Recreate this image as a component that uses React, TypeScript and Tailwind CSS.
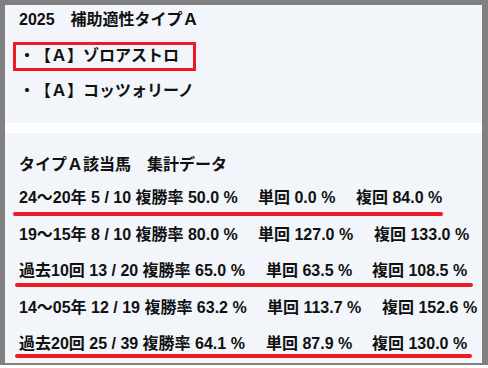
const FONT = { fontFamily: '"Liberation Sans", "Noto Sans CJK JP", sans-serif' };

type Row = {
  a: string;
  b: string;
  c: string;
  wa: string;
  wb: string;
  line?: { top: string; left: string; width: string };
};

const ROWS: Row[] = [
  {
    a: '24～20年 5 / 10 複勝率 50.0 %',
    b: '単回 0.0 %',
    c: '複回 84.0 %',
    wa: 'w-[239px]',
    wb: 'w-[98px]',
    line: { top: 'top-[32px]', left: '-left-[6px]', width: 'w-[430px]' },
  },
  {
    a: '19～15年 8 / 10 複勝率 80.0 %',
    b: '単回 127.0 %',
    c: '複回 133.0 %',
    wa: 'w-[239px]',
    wb: 'w-[116px]',
  },
  {
    a: '過去10回 13 / 20 複勝率 65.0 %',
    b: '単回 63.5 %',
    c: '複回 108.5 %',
    wa: 'w-[247px]',
    wb: 'w-[106px]',
    line: { top: 'top-[30px]', left: '-left-[4px]', width: 'w-[458px]' },
  },
  {
    a: '14～05年 12 / 19 複勝率 63.2 %',
    b: '単回 113.7 %',
    c: '複回 152.6 %',
    wa: 'w-[248px]',
    wb: 'w-[115px]',
  },
  {
    a: '過去20回 25 / 39 複勝率 64.1 %',
    b: '単回 87.9 %',
    c: '複回 130.0 %',
    wa: 'w-[247px]',
    wb: 'w-[106px]',
    line: { top: 'top-[28px]', left: '-left-[4px]', width: 'w-[457px]' },
  },
];

export default function App() {
  return (
    <div className="w-[488px] h-[368px] bg-white [text-spacing-trim:space-all]" style={FONT}>
      <div className="h-[365px] bg-[#808080] pl-[5px] pt-[5px] pr-[6px] pb-[3px]">
        <div className="h-full bg-white flex flex-col gap-[10px] text-[16px] font-bold text-[#111]">
          {/* 補助適性タイプ */}
          <section className="h-[118px] shrink-0 bg-[#f2f6fa] px-[14px]">
            <p className="h-[28px] leading-[28px] pt-[1px]">2025　補助適性タイプＡ</p>
            <ul className="mt-[5px]">
              <li className="relative h-[35px] leading-[35px] whitespace-nowrap">
                ・【Ａ】ゾロアストロ
                <span className="absolute -left-[6px] top-[4px] w-[183px] h-[29px] border-[3px] border-[#ed1c24]" />
              </li>
              <li className="h-[35px] leading-[35px] whitespace-nowrap">・【Ａ】コッツォリーノ</li>
            </ul>
          </section>

          {/* 集計データ */}
          <section className="flex-1 bg-[#f2f6fa] px-[14px] pt-[18px]">
            <p className="h-[28px] leading-[28px]">タイプＡ該当馬　集計データ</p>
            <div className="mt-[1px]">
              {ROWS.map((r) => (
                <div key={r.a} className="relative flex h-[36.5px] leading-[36.5px] whitespace-nowrap">
                  <span className={`${r.wa} shrink-0`}>{r.a}</span>
                  <span className={`${r.wb} shrink-0`}>{r.b}</span>
                  <span>{r.c}</span>
                  {r.line && (
                    <span
                      className={`absolute ${r.line.top} ${r.line.left} ${r.line.width} h-[4px] rounded-full bg-[#ed1c24]`}
                    />
                  )}
                </div>
              ))}
            </div>
          </section>
        </div>
      </div>
    </div>
  );
}
